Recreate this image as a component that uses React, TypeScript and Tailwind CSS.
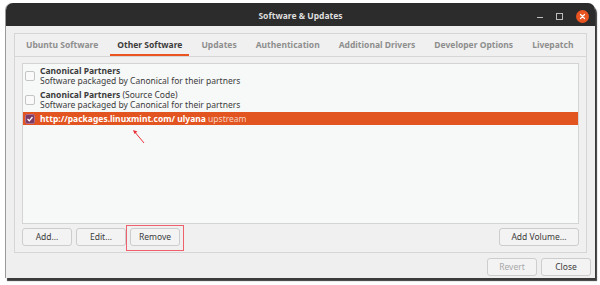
import React from "react";

const TABS = [
  "Ubuntu Software",
  "Other Software",
  "Updates",
  "Authentication",
  "Additional Drivers",
  "Developer Options",
  "Livepatch",
];

const ACTIVE_TAB = "Other Software";

export default function App() {
  return (
    <div className="w-[600px] h-[285px] bg-white pt-[3px] pl-[5px] font-['Noto_Sans',sans-serif]">
      <div className="w-[590px] h-[275px] flex flex-col bg-[#efefef] rounded-t-[7px] border-l border-[#9a9a9a] shadow-[2px_3px_1px_#3a3a3a]">
        {/* ── Title bar ───────────────────────────────────────────── */}
        <div className="relative h-[23px] shrink-0 rounded-t-[7px] bg-[#2c2c2c] flex items-center justify-center pt-[3px]">
          <span className="text-[8.5px] font-bold text-[#dedede] whitespace-nowrap">Software &amp; Updates</span>
          <div className="absolute right-[6px] top-0 h-full pt-[3px] flex items-center gap-[13px]">
            <span className="block w-[6px] h-[1px] bg-[#bdbdbd] mt-[3px]" />
            <span className="block w-[7px] h-[7px] border border-[#bdbdbd]" />
            <span className="flex w-[13px] h-[13px] rounded-full bg-[#e95420] items-center justify-center">
              <svg width="7" height="7" viewBox="0 0 7 7">
                <path d="M1.5 1.5 L5.5 5.5 M5.5 1.5 L1.5 5.5" stroke="#fff" strokeWidth="1.2" strokeLinecap="round" />
              </svg>
            </span>
          </div>
        </div>

        {/* ── Notebook ────────────────────────────────────────────── */}
        <div className="mx-[8px] mt-[7px] h-[220px] flex flex-col border border-[#d6d6d6] bg-[#f0f0f0]">
          <div className="h-[23px] shrink-0 flex items-stretch pl-[4px] gap-[5px] border-b border-[#d6d6d6]">
            {TABS.map((t) => (
              <div
                key={t}
                className={
                  t === ACTIVE_TAB
                    ? "px-[7px] flex items-center whitespace-nowrap text-[8.5px] font-bold text-[#3c3c3c] border-b-2 border-[#e95420] pt-[2px]"
                    : "px-[7px] flex items-center whitespace-nowrap text-[8.5px] font-bold text-[#8e8e8e] border-b-2 border-transparent pt-[2px]"
                }
              >
                {t}
              </div>
            ))}
          </div>

          <div className="flex-1 flex flex-col px-[7px] pt-[6px] pb-[6px] gap-[4px]">
            {/* list */}
            <div className="relative flex-1 border border-[#d4d4d4] bg-[#f7f8f8] text-[8.5px] leading-[10px] text-[#3c3c3c]">
              <SourceRow
                title={<span className="font-bold">Canonical Partners</span>}
                sub="Software packaged by Canonical for their partners"
              />
              <SourceRow
                title={
                  <>
                    <span className="font-bold">Canonical Partners</span> (Source Code)
                  </>
                }
                sub="Software packaged by Canonical for their partners"
              />
              <div className="h-[13px] flex items-center gap-[5px] px-[2px] bg-[#e25420] text-white whitespace-nowrap">
                <Checkbox checked />
                <span>
                  <span className="font-bold">http://packages.linuxmint.com/ ulyana</span>{" "}
                  <span className="text-[#f6d2c2]">upstream</span>
                </span>
              </div>

              {/* annotation arrow */}
              <svg className="absolute left-[109px] top-[65px]" width="14" height="16" viewBox="0 0 14 16">
                <path d="M12 14 L2 2" stroke="#e8333a" strokeWidth="1" />
                <path d="M1 1 L5.5 2.5 L2.5 5 Z" fill="#e8333a" />
              </svg>
            </div>

            {/* buttons */}
            <div className="flex items-center gap-[4px]">
              <Btn>Add...</Btn>
              <Btn>Edit...</Btn>
              <div className="relative">
                <Btn>Remove</Btn>
                <div className="absolute -left-[4px] -right-[4px] -top-[3px] -bottom-[5px] border border-[#f0606a]" />
              </div>
              <div className="flex-1" />
              <Btn wide>Add Volume...</Btn>
            </div>
          </div>
        </div>

        {/* ── Footer ──────────────────────────────────────────────── */}
        <div className="flex justify-end gap-[4px] pr-[4px] mt-[5px]">
          <Btn disabled>Revert</Btn>
          <Btn>Close</Btn>
        </div>
      </div>
    </div>
  );
}

// ─── Small helpers ────────────────────────────────────────────────────────────

function SourceRow({ title, sub }: { title: React.ReactNode; sub: string }) {
  return (
    <div className="h-[24px] flex items-center gap-[5px] px-[2px]">
      <Checkbox />
      <div className="flex flex-col whitespace-nowrap">
        <span>{title}</span>
        <span>{sub}</span>
      </div>
    </div>
  );
}

function Checkbox({ checked = false }: { checked?: boolean }) {
  if (checked) {
    return (
      <span className="flex w-[10px] h-[10px] rounded-[2px] bg-[#7b3b64] border border-[#b06a8c] items-center justify-center">
        <svg width="8" height="8" viewBox="0 0 8 8">
          <path d="M1.5 4 L3.3 5.8 L6.5 2" stroke="#fff" strokeWidth="1.3" fill="none" />
        </svg>
      </span>
    );
  }
  return <span className="block w-[10px] h-[10px] rounded-[2px] bg-[#fafafa] border border-[#c4c4c4]" />;
}

function Btn({
  children,
  wide = false,
  disabled = false,
}: {
  children: React.ReactNode;
  wide?: boolean;
  disabled?: boolean;
}) {
  return (
    <button
      className={
        (wide ? "w-[80px] " : "w-[50px] ") +
        "h-[18px] rounded-[3px] border border-[#cdcdcd] bg-[#f3f3f3] text-[8.5px] flex items-center justify-center " +
        (disabled ? "text-[#a8a8a8]" : "text-[#3c3c3c]")
      }
    >
      {children}
    </button>
  );
}
